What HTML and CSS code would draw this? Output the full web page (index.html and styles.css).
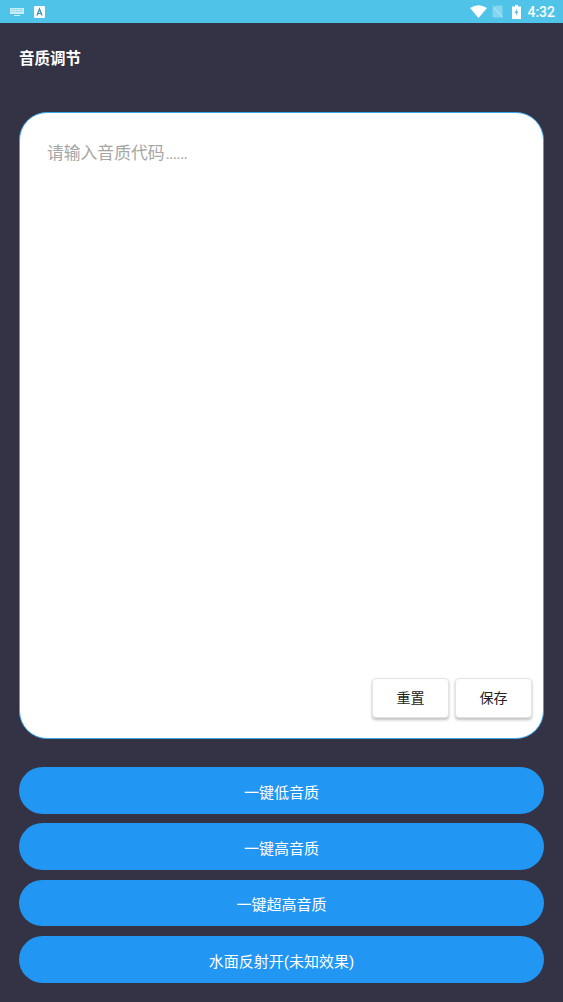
FILE: index.html
```html
<!DOCTYPE html>
<html lang="zh-CN">
<head>
    <meta charset="UTF-8">
    <meta name="viewport" content="width=device-width, initial-scale=1.0">
    <title>音质调节</title>
    <link rel="stylesheet" href="styles.css">
</head>
<body>
    <div class="status-bar">
        <div class="status-left">
            <svg class="icon-keyboard" width="14" height="8" viewBox="0 0 14 8">
                <rect x="0" y="0" width="14" height="6" fill="#fff" opacity="0.7"/>
                <path d="M1 1.500h12M1 3.500h12" stroke="#4fc3e8" stroke-width="0.7" stroke-dasharray="1 0.7"/>
                <rect x="4" y="7" width="6" height="1" fill="#fff" opacity="0.7"/>
            </svg>
            <svg class="icon-a" width="11" height="12" viewBox="0 0 11 12">
                <rect width="11" height="12" rx="1" fill="#fff" opacity="0.95"/>
                <path d="M3 9.500L5.500 3L8 9.500M4 7.500h3" stroke="#3d8fb0" stroke-width="1.200" fill="none"/>
            </svg>
        </div>
        <div class="status-right">
            <svg class="icon-wifi" width="17" height="13" viewBox="0 0 17 13">
                <path d="M0 3Q8.500 -2.500 17 3L8.500 13Z" fill="#fff"/>
            </svg>
            <svg class="icon-sim" width="11" height="13" viewBox="0 0 11 13">
                <path d="M3.500 0.500H10.500V12.500H0.500V3.500Z" fill="#fff" opacity="0.3"/>
                <path d="M0.500 0.500L10.500 12.500" stroke="#fff" stroke-width="1" opacity="0.45"/>
            </svg>
            <svg class="icon-battery" width="9" height="14" viewBox="0 0 9 14">
                <path d="M3 0h3v1.500h3V14H0V1.500h3Z" fill="#fff"/>
                <path d="M5 3.500L2.500 8H4.200L3.800 11L6.500 6.500H4.700Z" fill="#4fc3e8"/>
            </svg>
            <span class="clock">4:32</span>
        </div>
    </div>

    <div class="page">
        <h1 class="title">音质调节</h1>

        <div class="editor">
            <div class="placeholder">请输入音质代码<span class="dots">......</span></div>
            <div class="editor-actions">
                <button type="button" class="small-btn">重置</button>
                <button type="button" class="small-btn">保存</button>
            </div>
        </div>

        <div class="presets">
            <button type="button" class="preset-btn">一键低音质</button>
            <button type="button" class="preset-btn">一键高音质</button>
            <button type="button" class="preset-btn">一键超高音质</button>
            <button type="button" class="preset-btn">水面反射开(未知效果)</button>
        </div>
    </div>
</body>
</html>
```

FILE: styles.css
```css
* {
    box-sizing: border-box;
}
body {
    margin: 0;
    height: 1002px;
    overflow: hidden;
    background-color: #333345;
    font-family: Roboto, "Noto Sans CJK SC", sans-serif;
}
.status-bar {
    height: 23px;
    background-color: #4fc3e8;
    display: flex;
    align-items: center;
    justify-content: space-between;
    padding: 0 8px 0 10px;
}
.status-left {
    display: flex;
    align-items: center;
    gap: 10px;
}
.status-right {
    display: flex;
    align-items: center;
}
.icon-wifi {
    margin-right: 5px;
}
.icon-sim {
    margin-right: 9px;
}
.clock {
    margin-left: 6px;
    color: #fff;
    font-size: 14px;
    font-weight: 500;
}
.page {
    padding: 0 19px;
}
.title {
    margin: 0;
    padding-top: 26px;
    height: 89px;
    color: #fff;
    font-size: 15.500px;
    line-height: 21px;
    font-weight: 700;
}
.editor {
    height: 627px;
    background-color: #fff;
    border: 1px solid #3aa6e8;
    border-radius: 28px;
    padding: 29px 11px 20px 27px;
    display: flex;
    flex-direction: column;
    justify-content: space-between;
}
.placeholder {
    color: #a6a6a6;
    font-size: 16.800px;
    line-height: 23px;
}
.dots {
    margin-left: 1px;
    letter-spacing: -0.800px;
}
.editor-actions {
    display: flex;
    justify-content: flex-end;
    gap: 6px;
}
.small-btn {
    width: 77px;
    height: 40px;
    padding-bottom: 3px;
    background-color: #fff;
    border: 1px solid #e4e4e4;
    border-radius: 4px;
    box-shadow: 0 2px 3px rgba(0, 0, 0, 0.25);
    color: #222;
    font-family: inherit;
    font-size: 14px;
}
.presets {
    margin-top: 28px;
    display: flex;
    flex-direction: column;
    gap: 9.750px;
}
.preset-btn {
    height: 46.600px;
    padding-top: 3px;
    background-color: #2196f3;
    border: none;
    border-radius: 24px;
    color: #fff;
    font-family: inherit;
    font-size: 15px;
}
```
